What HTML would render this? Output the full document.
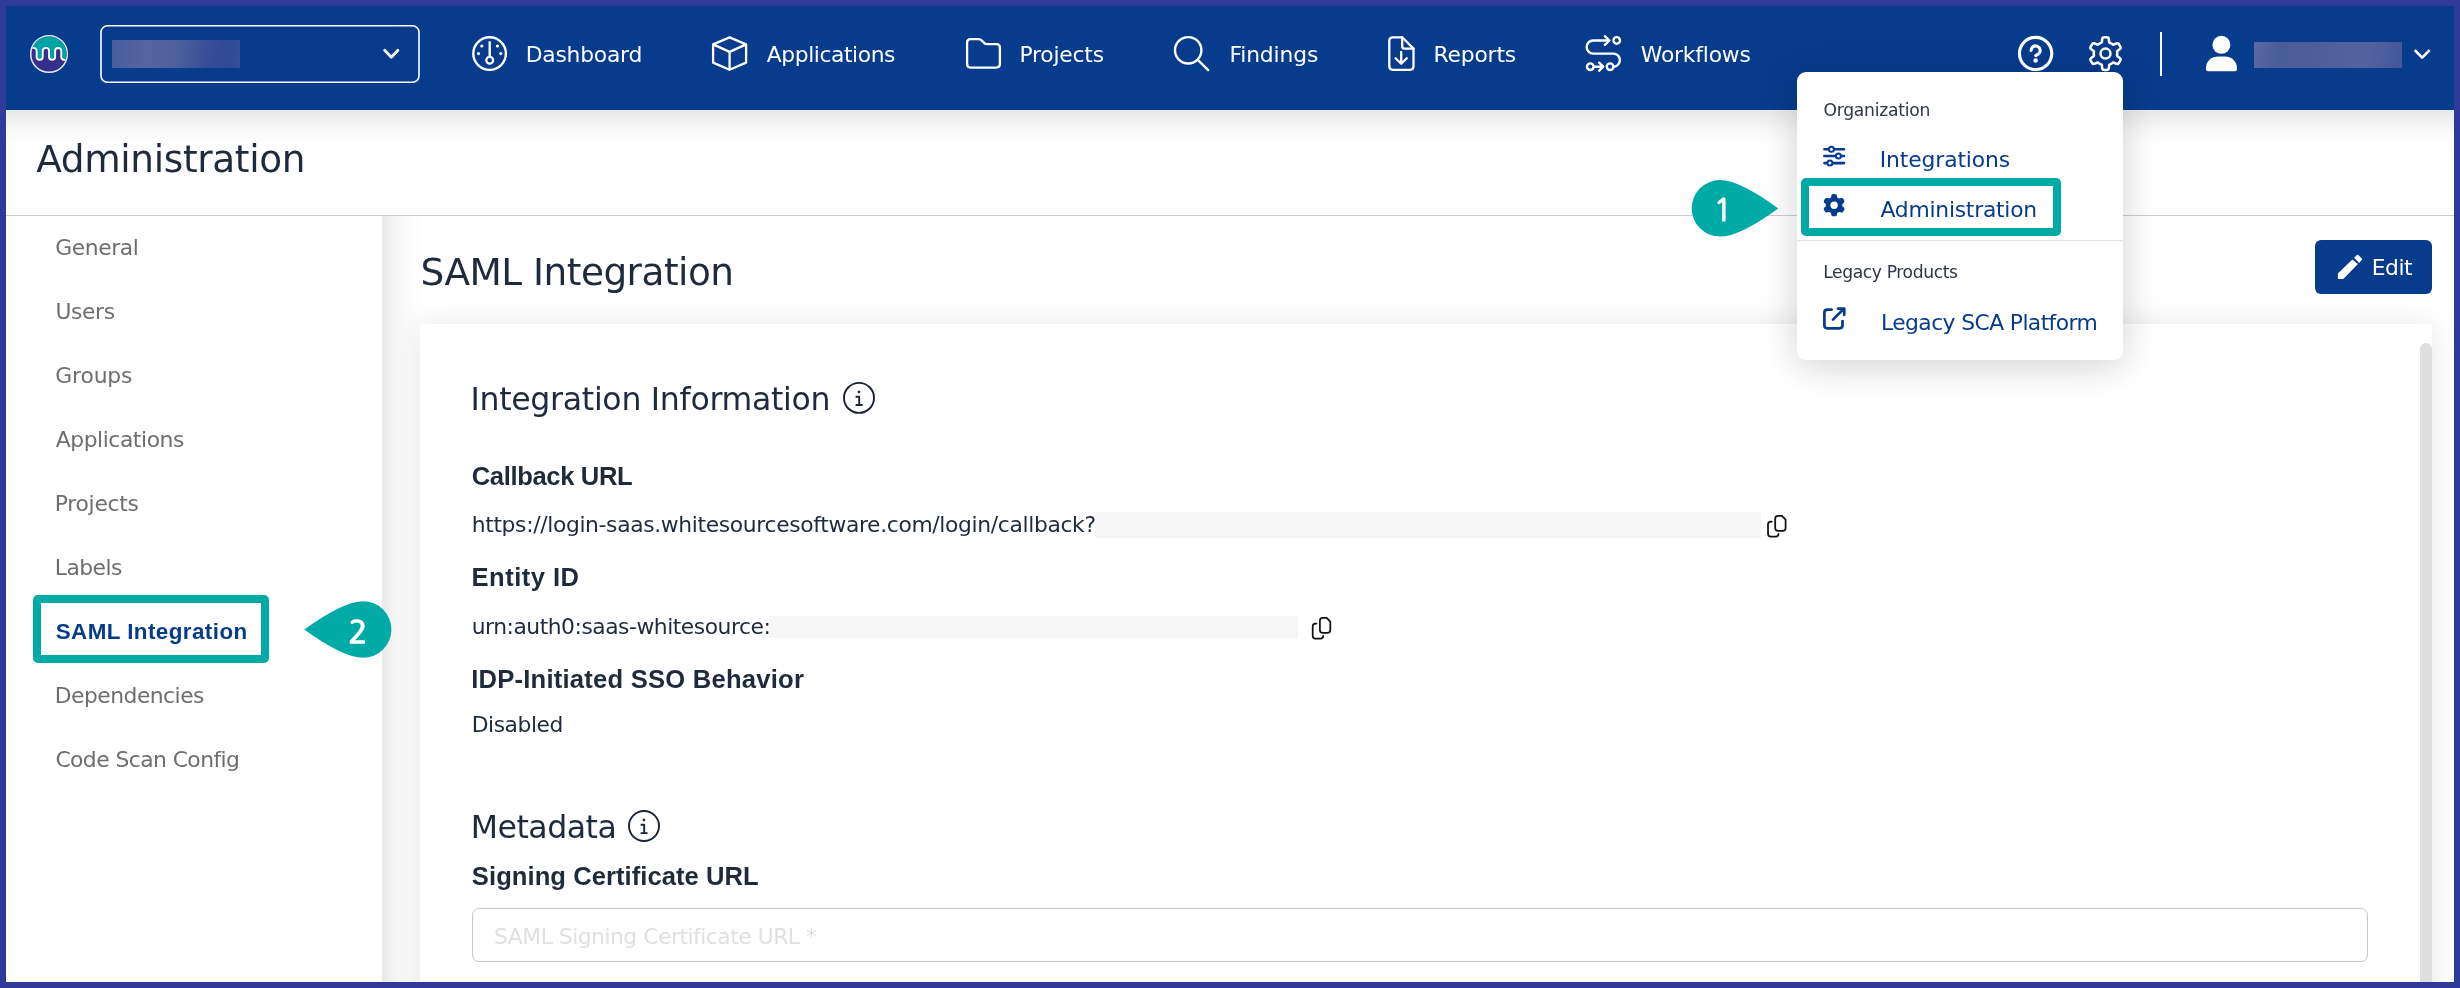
<!DOCTYPE html>
<html lang="en">
<head>
<meta charset="utf-8">
<title>Administration - SAML Integration</title>
<style>
*{box-sizing:border-box;margin:0;padding:0}
html,body{width:2460px;height:988px;overflow:hidden;background:#303a98;font-family:"Liberation Sans",sans-serif}
.abs{position:absolute}
#app{position:absolute;left:6px;top:6px;width:2448px;height:976px;background:#fff;overflow:hidden}
/* coordinates inside #app are page coords minus 6; we instead shift a page-coordinate layer */
#stage{position:absolute;left:-6px;top:-6px;width:2460px;height:988px}
#nav{left:6px;top:6px;width:2448px;height:104px;background:#073b8c}
#navsh{left:6px;top:110px;width:2448px;height:38px;background:linear-gradient(to bottom,rgba(0,0,0,.092) 0,rgba(0,0,0,.07) 16%,rgba(0,0,0,.05) 32%,rgba(0,0,0,.028) 52%,rgba(0,0,0,.012) 72%,rgba(0,0,0,0) 100%)}
#hline{left:6px;top:215px;width:2448px;height:1px;background:#c6ced2}
#main{left:382px;top:216px;width:2072px;height:766px;background:#fff;overflow:hidden}
#mainsh{left:382px;top:216px;width:42px;height:766px;background:linear-gradient(to right,rgba(0,0,0,.085) 0,rgba(0,0,0,.058) 17%,rgba(0,0,0,.036) 36%,rgba(0,0,0,.018) 58%,rgba(0,0,0,.006) 80%,rgba(0,0,0,0) 100%)}
#card{left:420px;top:324px;width:2012px;height:700px;background:#fff;box-shadow:0 0 28px rgba(0,0,0,.1)}
#sbar{left:2420px;top:343px;width:12px;height:660px;background:#dfdfdf;border-radius:6px 6px 0 0}
#edit{left:2315px;top:240px;width:117px;height:54px;background:#073b8c;border-radius:6px}
.blur{background:#f6f6f6}
#inp{left:472px;top:908px;width:1896px;height:54px;border:1px solid #c5c7d0;border-radius:7px;background:#fff}
.nblur{background:linear-gradient(100deg,rgba(255,255,255,.30),rgba(255,255,255,.22))}
#menu{left:1797px;top:72px;width:326px;height:288px;background:#fff;border-radius:9px;box-shadow:0 6px 38px rgba(0,0,0,.18)}
#mline{left:1797px;top:240px;width:326px;height:1px;background:#e2e2e2}
.tbox{border:8px solid #00aba5;border-radius:5px}
.g{display:contents}
ul{list-style:none}
.t{position:absolute;display:block;white-space:pre;line-height:1;font-weight:400;font-style:normal;text-decoration:none;font-family:"DejaVu Sans","Liberation Sans",sans-serif}
.lb{font-family:"Liberation Sans",sans-serif}
.ng{font-family:NanumGothic,"Liberation Sans",sans-serif}
svg{position:absolute;left:0;top:0;overflow:visible}
</style>
</head>
<body>
<div id="app"><div id="stage">
  <div class="abs" id="main"></div>
  <div class="abs" id="mainsh"></div>
  <div class="abs" id="card"></div>
  <div class="abs" id="sbar"></div>
  <div class="abs" id="hline"></div>
  <div class="abs" id="navsh"></div>
  <div class="abs" id="nav"></div>
  <div class="abs" style="left:112px;top:40px;width:128px;height:27.8px;background:linear-gradient(100deg,#485b9c 0%,#5565a1 28%,#4e5f9e 50%,#354b97 78%,#2f4a96 90%,#364f99 100%)"></div>
  <div class="abs" style="left:2254px;top:42.2px;width:148px;height:25.6px;background:linear-gradient(100deg,#5b6aa4 0%,#4a5b9b 18%,#4f5f9d 50%,#53629f 75%,#44569a 100%)"></div>
  <div class="abs" style="left:2160px;top:32px;width:2.2px;height:44px;background:#fff"></div>
  <div class="abs" id="edit"></div>
  <div class="abs blur" style="left:1094.5px;top:512px;width:666.5px;height:25.6px"></div>
  <div class="abs blur" style="left:768.5px;top:616.3px;width:529px;height:21.5px"></div>
  <div class="abs" id="inp"></div>
  <div class="abs" id="menu"></div>
  <div class="abs" id="mline"></div>
  <div class="abs tbox" style="left:1801px;top:178px;width:260px;height:57.5px"></div>
  <div class="abs tbox" style="left:33px;top:595px;width:236px;height:68px"></div>

<svg width="2460" height="988" viewBox="0 0 2460 988" fill="none" stroke-linecap="round" stroke-linejoin="round">
<!-- logo -->
<g>
  <clipPath id="lc"><circle cx="49" cy="54" r="17.6"/></clipPath>
  <circle cx="49" cy="54" r="18.3" fill="#36308d" stroke="#e9ecf6" stroke-width="1.5"/>
  <g clip-path="url(#lc)">
    <path fill="#00a3a3" d="M28,30 L28,47.9 L33.6,47.9 A3.05,3.05 0 0 1 36.65,51 L36.65,56.8 A3.05,3.05 0 0 0 42.75,56.8 L42.75,51 A3.15,3.15 0 0 1 49.05,51 L49.05,56.8 A3.05,3.05 0 0 0 55.15,56.8 L55.15,51 A3.05,3.05 0 0 1 61.25,51 L61.25,56.8 A3.05,3.05 0 0 0 64.3,59.9 L70,59.9 L70,30 Z"/>
    <path stroke="#fff" stroke-width="1.9" d="M28,47.9 L33.6,47.9 A3.05,3.05 0 0 1 36.65,51 L36.65,56.8 A3.05,3.05 0 0 0 42.75,56.8 L42.75,51 A3.15,3.15 0 0 1 49.05,51 L49.05,56.8 A3.05,3.05 0 0 0 55.15,56.8 L55.15,51 A3.05,3.05 0 0 1 61.25,51 L61.25,56.8 A3.05,3.05 0 0 0 64.3,59.9 L70,59.9"/>
  </g>
</g>
<!-- select box -->
<rect x="101" y="25.8" width="318" height="56.5" rx="6.5" stroke="#fff" stroke-width="1.6"/>
<!-- select chevron -->
<path stroke="#fff" stroke-width="2.8" d="M384.7,50.3 L391.3,57.3 L397.9,50.3"/>
<!-- user chevron -->
<path stroke="#fff" stroke-width="2.6" stroke-linecap="square" d="M2415.6,51 L2422.15,57.6 L2428.7,51"/>
<!-- dashboard -->
<g stroke="#fff" stroke-width="2.4">
  <circle cx="489.6" cy="53.6" r="16.3"/>
  <path d="M489.7,42.2 L489.7,56.6"/>
  <circle cx="489.7" cy="60.3" r="3.4" stroke-width="2.2"/>
  <g fill="#fff" stroke="none"><circle cx="481.8" cy="46" r="1.6"/><circle cx="497.4" cy="46" r="1.6"/><circle cx="478.5" cy="53.6" r="1.6"/><circle cx="500.8" cy="53.6" r="1.6"/></g>
</g>
<!-- cube -->
<path stroke="#fff" stroke-width="2.3" d="M729.6,37.4 L746.1,44.4 L746.1,62.6 L729.6,69.8 L713.1,62.6 L713.1,44.4 Z M713.1,44.4 L729.6,51.9 L746.1,44.4 M729.6,51.9 L729.6,69.8"/>
<!-- folder -->
<path stroke="#fff" stroke-width="2.3" d="M970.6,39.1 L978.6,39.1 Q980.4,39.1 981.6,40.4 L984.6,43.4 Q985.4,44.2 986.8,44.2 L996.4,44.2 Q999.9,44.2 999.9,47.7 L999.9,64.1 Q999.9,67.6 996.4,67.6 L970.6,67.6 Q967.1,67.6 967.1,64.1 L967.1,42.6 Q967.1,39.1 970.6,39.1 Z"/>
<!-- search -->
<g stroke="#fff" stroke-width="2.4"><circle cx="1188.2" cy="50.3" r="13.2"/><path d="M1197.8,59.9 L1208.2,70.1"/></g>
<!-- file download -->
<g stroke="#fff" stroke-width="2.3">
  <path d="M1392.8,37.3 L1402.2,37.3 L1413.5,48.6 L1413.5,66.3 Q1413.5,69.8 1410,69.8 L1392.8,69.8 Q1389.3,69.8 1389.3,66.3 L1389.3,40.8 Q1389.3,37.3 1392.8,37.3 Z"/>
  <path d="M1402.2,37.3 L1402.2,46.6 Q1402.2,48.6 1404.2,48.6 L1413.5,48.6"/>
  <path d="M1401.2,52 L1401.2,63.4 M1395.6,58.2 L1401.2,63.8 L1406.8,58.2"/>
</g>
<!-- workflows -->
<g stroke="#fff" stroke-width="2.4">
  <path d="M1608.8,40.5 L1593.2,40.5 A6.55,6.55 0 0 0 1593.2,53.6 L1613.2,53.6 A6.55,6.55 0 0 1 1613.4,66.7"/>
  <path d="M1604.9,36.2 L1609.3,40.5 L1604.9,44.8"/>
  <circle cx="1616.7" cy="40.4" r="3.3"/>
  <circle cx="1610.1" cy="66.7" r="3.3"/>
  <circle cx="1590.3" cy="66.7" r="3.3"/>
  <path d="M1594.8,66.7 L1602.6,66.7 M1599.2,62.7 L1603.2,66.7 L1599.2,70.7"/>
</g>
<!-- help -->
<g stroke="#fff"><circle cx="2035.6" cy="53.5" r="16.15" stroke-width="3.1"/>
  <path stroke-width="3.1" d="M2031.1,50.5 A4.55,4.5 0 1 1 2038.5,53.9 Q2036.2,55.2 2035.8,55.6"/>
  <circle cx="2035.6" cy="60.5" r="2.25" fill="#fff" stroke="none"/>
</g>
<!-- gear outline -->
<g stroke="#fff" stroke-width="2.5">
  <path d="M2117.2,53.6 L2117.2,54.0 L2117.2,54.4 L2117.1,54.8 L2117.1,55.2 L2117.0,55.6 L2117.2,56.1 L2118.0,56.7 L2119.1,57.5 L2120.2,58.4 L2120.7,59.1 L2120.6,59.7 L2120.4,60.2 L2120.2,60.7 L2119.9,61.3 L2119.6,61.8 L2119.3,62.2 L2119.0,62.7 L2118.7,63.2 L2118.3,63.6 L2117.9,64.0 L2117.0,63.9 L2115.7,63.5 L2114.4,62.9 L2113.5,62.5 L2113.0,62.6 L2112.7,62.8 L2112.4,63.1 L2112.0,63.3 L2111.7,63.5 L2111.3,63.7 L2111.0,63.9 L2110.6,64.1 L2110.3,64.3 L2109.9,64.4 L2109.5,64.6 L2109.2,64.9 L2109.0,66.0 L2108.9,67.4 L2108.7,68.7 L2108.3,69.5 L2107.8,69.7 L2107.2,69.8 L2106.6,69.9 L2106.1,69.9 L2105.5,69.9 L2104.9,69.9 L2104.4,69.9 L2103.8,69.8 L2103.2,69.7 L2102.7,69.5 L2102.3,68.7 L2102.1,67.4 L2102.0,66.0 L2101.8,64.9 L2101.5,64.6 L2101.1,64.4 L2100.7,64.3 L2100.4,64.1 L2100.0,63.9 L2099.7,63.7 L2099.3,63.5 L2099.0,63.3 L2098.6,63.1 L2098.3,62.8 L2098.0,62.6 L2097.5,62.5 L2096.6,62.9 L2095.3,63.5 L2094.0,63.9 L2093.1,64.0 L2092.7,63.6 L2092.3,63.2 L2092.0,62.7 L2091.7,62.2 L2091.4,61.8 L2091.1,61.3 L2090.8,60.7 L2090.6,60.2 L2090.4,59.7 L2090.3,59.1 L2090.8,58.4 L2091.9,57.5 L2093.0,56.7 L2093.8,56.1 L2094.0,55.6 L2093.9,55.2 L2093.9,54.8 L2093.8,54.4 L2093.8,54.0 L2093.8,53.6 L2093.8,53.2 L2093.8,52.8 L2093.9,52.4 L2093.9,52.0 L2094.0,51.6 L2093.8,51.1 L2093.0,50.5 L2091.9,49.7 L2090.8,48.8 L2090.3,48.1 L2090.4,47.5 L2090.6,47.0 L2090.8,46.5 L2091.1,45.9 L2091.4,45.5 L2091.7,45.0 L2092.0,44.5 L2092.3,44.0 L2092.7,43.6 L2093.1,43.2 L2094.0,43.3 L2095.3,43.7 L2096.6,44.3 L2097.5,44.7 L2098.0,44.6 L2098.3,44.4 L2098.6,44.1 L2099.0,43.9 L2099.3,43.7 L2099.7,43.5 L2100.0,43.3 L2100.4,43.1 L2100.7,42.9 L2101.1,42.8 L2101.5,42.6 L2101.8,42.3 L2102.0,41.2 L2102.1,39.8 L2102.3,38.5 L2102.7,37.7 L2103.2,37.5 L2103.8,37.4 L2104.4,37.3 L2104.9,37.3 L2105.5,37.3 L2106.1,37.3 L2106.6,37.3 L2107.2,37.4 L2107.8,37.5 L2108.3,37.7 L2108.7,38.5 L2108.9,39.8 L2109.0,41.2 L2109.2,42.3 L2109.5,42.6 L2109.9,42.8 L2110.3,42.9 L2110.6,43.1 L2111.0,43.3 L2111.3,43.5 L2111.7,43.7 L2112.0,43.9 L2112.4,44.1 L2112.7,44.4 L2113.0,44.6 L2113.5,44.7 L2114.4,44.3 L2115.7,43.7 L2117.0,43.3 L2117.9,43.2 L2118.3,43.6 L2118.7,44.0 L2119.0,44.5 L2119.3,45.0 L2119.6,45.4 L2119.9,45.9 L2120.2,46.5 L2120.4,47.0 L2120.6,47.5 L2120.7,48.1 L2120.2,48.8 L2119.1,49.7 L2118.0,50.5 L2117.2,51.1 L2117.0,51.6 L2117.1,52.0 L2117.1,52.4 L2117.2,52.8 L2117.2,53.2Z"/>
  <circle cx="2105.5" cy="53.6" r="5"/>
</g>
<!-- user -->
<g fill="#fff" stroke="none"><circle cx="2221.4" cy="44.8" r="9"/>
  <path d="M2205.9,68.9 C2205.9,61 2211.4,56.6 2218.4,56.6 L2224.5,56.6 C2231.5,56.6 2237,61 2237,68.9 Q2237,71.2 2234.7,71.2 L2208.2,71.2 Q2205.9,71.2 2205.9,68.9 Z"/></g>
<!-- pencil -->
<g fill="#fff" stroke="none">
  <path d="M2337.9,278.9 L2337.9,273.5 L2352.3,259.5 L2357.9,264.1 L2343.4,278.9 Z"/>
  <path d="M2354.1,257.7 L2356.9,255.1 Q2357.6,254.5 2358.3,255.1 L2361.8,258.6 Q2362.4,259.3 2361.8,260 L2359.2,262.9 Z"/>
</g>
<!-- info icons -->
<g stroke="#1a2433" stroke-width="1.9">
  <circle cx="859" cy="397.9" r="15"/>
  <path d="M855.6,396.7 L859.2,396.7 L859.2,405 M855.6,405 L862.6,405" stroke-linecap="butt"/>
  <path d="M858.9,390.2 L860.6,391.9 L858.9,393.6 L857.2,391.9 Z" fill="#1a2433" stroke="none"/>
  <circle cx="644" cy="826" r="15"/>
  <path d="M640.6,824.8 L644.2,824.8 L644.2,833.1 M640.6,833.1 L647.6,833.1" stroke-linecap="butt"/>
  <path d="M643.9,818.3 L645.6,820 L643.9,821.7 L642.2,820 Z" fill="#1a2433" stroke="none"/>
</g>
<!-- copy icons -->
<g stroke="#111" stroke-width="1.75">
  <path d="M1778,515.9 L1782,515.9 L1785.6,519.6 L1785.6,528 Q1785.6,530.8 1782.8,530.8 L1778,530.8 Q1775.2,530.8 1775.2,528 L1775.2,518.7 Q1775.2,515.9 1778,515.9 Z"/>
  <path d="M1771.8,521.5 L1770.8,521.5 Q1768,521.5 1768,524.3 L1768,533.7 Q1768,536.5 1770.8,536.5 L1775.7,536.5 Q1778.5,536.5 1778.5,533.9"/>
</g>
<g stroke="#111" stroke-width="1.75" transform="translate(-455.3,102)">
  <path d="M1778,515.9 L1782,515.9 L1785.6,519.6 L1785.6,528 Q1785.6,530.8 1782.8,530.8 L1778,530.8 Q1775.2,530.8 1775.2,528 L1775.2,518.7 Q1775.2,515.9 1778,515.9 Z"/>
  <path d="M1771.8,521.5 L1770.8,521.5 Q1768,521.5 1768,524.3 L1768,533.7 Q1768,536.5 1770.8,536.5 L1775.7,536.5 Q1778.5,536.5 1778.5,533.9"/>
</g>
<!-- sliders -->
<g stroke="#073b8c" stroke-width="2.6">
  <path d="M1824.4,149.2 L1844,149.2 M1824.4,156 L1844,156 M1824.4,163.1 L1844,163.1"/>
  <g fill="#fff" stroke-width="2"><circle cx="1831.4" cy="149.2" r="2.5"/><circle cx="1838.4" cy="156" r="2.5"/><circle cx="1829.9" cy="163.1" r="2.5"/></g>
</g>
<!-- gear solid -->
<path fill="#073b8c" stroke="#073b8c" stroke-width="1.6" fill-rule="evenodd" d="M1841.6,205.2 L1841.6,205.6 L1841.6,206.0 L1841.5,206.4 L1841.6,206.8 L1842.4,207.4 L1843.4,208.2 L1843.7,208.9 L1843.5,209.4 L1843.3,209.9 L1843.0,210.3 L1842.7,210.8 L1842.4,211.3 L1842.1,211.7 L1841.4,211.7 L1840.2,211.3 L1839.2,210.9 L1838.8,211.0 L1838.5,211.3 L1838.2,211.5 L1837.8,211.7 L1837.5,211.9 L1837.2,212.1 L1836.8,212.2 L1836.5,212.5 L1836.3,213.5 L1836.1,214.8 L1835.7,215.4 L1835.2,215.4 L1834.6,215.5 L1834.1,215.5 L1833.6,215.5 L1833.0,215.4 L1832.5,215.4 L1832.1,214.8 L1831.9,213.5 L1831.7,212.5 L1831.4,212.2 L1831.0,212.1 L1830.7,211.9 L1830.3,211.7 L1830.0,211.5 L1829.7,211.3 L1829.4,211.0 L1829.0,210.9 L1828.0,211.3 L1826.8,211.7 L1826.1,211.7 L1825.8,211.3 L1825.5,210.8 L1825.2,210.3 L1824.9,209.9 L1824.7,209.4 L1824.5,208.9 L1824.8,208.2 L1825.8,207.4 L1826.6,206.8 L1826.7,206.4 L1826.6,206.0 L1826.6,205.6 L1826.6,205.2 L1826.6,204.8 L1826.6,204.4 L1826.7,204.0 L1826.6,203.6 L1825.8,203.0 L1824.8,202.2 L1824.5,201.5 L1824.7,201.0 L1824.9,200.5 L1825.2,200.0 L1825.5,199.6 L1825.8,199.1 L1826.1,198.7 L1826.8,198.7 L1828.0,199.1 L1829.0,199.5 L1829.4,199.4 L1829.7,199.1 L1830.0,198.9 L1830.3,198.7 L1830.7,198.5 L1831.0,198.3 L1831.4,198.2 L1831.7,197.9 L1831.9,196.9 L1832.1,195.6 L1832.5,195.0 L1833.0,195.0 L1833.6,194.9 L1834.1,194.9 L1834.6,194.9 L1835.2,195.0 L1835.7,195.0 L1836.1,195.6 L1836.3,196.9 L1836.5,197.9 L1836.8,198.2 L1837.2,198.3 L1837.5,198.5 L1837.8,198.7 L1838.2,198.9 L1838.5,199.1 L1838.8,199.4 L1839.2,199.5 L1840.2,199.1 L1841.4,198.7 L1842.1,198.7 L1842.4,199.1 L1842.7,199.6 L1843.0,200.0 L1843.3,200.5 L1843.5,201.0 L1843.7,201.5 L1843.4,202.2 L1842.4,203.0 L1841.6,203.6 L1841.5,204.0 L1841.6,204.4 L1841.6,204.8Z"/>
<circle cx="1834.1" cy="205.2" r="3.7" fill="#fff" stroke="none"/>
<!-- external link -->
<g stroke="#073b8c" stroke-width="2.75">
  <path d="M1831.6,309.7 L1827.4,309.7 Q1824.4,309.7 1824.4,312.7 L1824.4,325.3 Q1824.4,328.3 1827.4,328.3 L1839.5,328.3 Q1842.5,328.3 1842.5,325.3 L1842.5,321"/>
  <path d="M1833,319.6 L1844,308.6 M1838,308.5 L1844.2,308.5 L1844.2,314.8"/>
</g>
<!-- markers -->
<path fill="#00aba5" stroke="none" d="M1720,180 Q1739.4,180 1778.2,208.4 Q1739.4,236.6 1720,236.6 A28.3,28.3 0 0 1 1720,180 Z"/>
<path fill="#00aba5" stroke="none" d="M363.1,601.2 Q343.5,601.2 304.2,629.5 Q343.5,657.8 363.1,657.8 A28.3,28.3 0 0 0 363.1,601.2 Z"/>

</svg>

<div id="txt" style="position:absolute;left:0;top:0;width:2460px;height:988px;will-change:transform">
<nav class="g" aria-label="Main navigation">
<a class="t" style="left:525.68px;top:43.72px;font-size:21.84px;color:#fff;letter-spacing:-0.229px">Dashboard</a>
<a class="t" style="left:766.79px;top:43.72px;font-size:21.84px;color:#fff;letter-spacing:-0.425px">Applications</a>
<a class="t" style="left:1019.48px;top:43.72px;font-size:21.84px;color:#fff;letter-spacing:-0.210px">Projects</a>
<a class="t" style="left:1229.38px;top:43.72px;font-size:21.84px;color:#fff;letter-spacing:-0.127px">Findings</a>
<a class="t" style="left:1433.58px;top:43.62px;font-size:21.84px;color:#fff;letter-spacing:-0.199px">Reports</a>
<a class="t" style="left:1640.81px;top:43.72px;font-size:21.84px;color:#fff;letter-spacing:-0.190px">Workflows</a>
</nav>
<header class="g">
<h1 class="t" style="left:36.17px;top:141.23px;font-size:37.44px;color:#1f2b3d;letter-spacing:-0.345px">Administration</h1>
</header>
<aside class="g" aria-label="Administration sections"><ul class="g">
<li class="t" style="left:55.37px;top:237.02px;font-size:21.84px;color:#6e6e6e;letter-spacing:-0.442px">General</li>
<li class="t" style="left:55.47px;top:301.02px;font-size:21.84px;color:#6e6e6e;letter-spacing:-0.389px">Users</li>
<li class="t" style="left:55.37px;top:365.02px;font-size:21.84px;color:#6e6e6e;letter-spacing:-0.157px">Groups</li>
<li class="t" style="left:55.69px;top:429.02px;font-size:21.84px;color:#6e6e6e;letter-spacing:-0.425px">Applications</li>
<li class="t" style="left:54.78px;top:493.02px;font-size:21.84px;color:#6e6e6e;letter-spacing:-0.267px">Projects</li>
<li class="t" style="left:54.78px;top:557.02px;font-size:21.84px;color:#6e6e6e;letter-spacing:-0.533px">Labels</li>
<li class="t lb" aria-current="page" style="left:55.73px;top:620.54px;font-size:22.4px;color:#073b8c;letter-spacing:0.437px;font-weight:700">SAML Integration</li>
<li class="t" style="left:54.78px;top:685.02px;font-size:21.84px;color:#6e6e6e;letter-spacing:-0.515px">Dependencies</li>
<li class="t" style="left:55.38px;top:749.02px;font-size:21.84px;color:#6e6e6e;letter-spacing:-0.553px">Code Scan Config</li>
</ul></aside>
<main class="g">
<h2 class="t" style="left:420.57px;top:253.53px;font-size:37.44px;color:#1f2b3d;letter-spacing:-0.524px">SAML Integration</h2>
<h3 class="t" style="left:470.41px;top:384.27px;font-size:31.59px;color:#1f2b3d;letter-spacing:-0.301px">Integration Information</h3>
<h4 class="t lb" style="left:471.72px;top:463.53px;font-size:25.6px;color:#1f2b3d;letter-spacing:-0.369px;font-weight:700">Callback URL</h4>
<p class="t" style="left:471.71px;top:514.12px;font-size:21.84px;color:#1f2b3d;letter-spacing:-0.348px">https://login-saas.whitesourcesoftware.com/login/callback?</p>
<h4 class="t lb" style="left:471.48px;top:565.23px;font-size:25.6px;color:#1f2b3d;letter-spacing:0.478px;font-weight:700">Entity ID</h4>
<p class="t" style="left:471.69px;top:615.52px;font-size:21.84px;color:#1f2b3d;letter-spacing:-0.474px">urn:auth0:saas-whitesource:</p>
<h4 class="t lb" style="left:471.18px;top:667.23px;font-size:25.6px;color:#1f2b3d;letter-spacing:0.225px;font-weight:700">IDP-Initiated SSO Behavior</h4>
<p class="t" style="left:471.68px;top:714.02px;font-size:21.84px;color:#1f2b3d;letter-spacing:-0.442px">Disabled</p>
<h3 class="t" style="left:470.81px;top:811.97px;font-size:31.59px;color:#1f2b3d;letter-spacing:-0.513px">Metadata</h3>
<h4 class="t lb" style="left:471.86px;top:864.33px;font-size:25.6px;color:#1f2b3d;letter-spacing:0.045px;font-weight:700">Signing Certificate URL</h4>
<span class="t" style="left:494.10px;top:925.62px;font-size:21.84px;color:#e0e0e0;letter-spacing:-0.487px">SAML Signing Certificate URL *</span>
<span class="t" style="left:2371.78px;top:256.52px;font-size:21.84px;color:#fff;letter-spacing:-0.464px">Edit</span>
</main>
<div class="g" role="menu" aria-label="Settings menu">
<h5 class="t" style="left:1823.41px;top:102.08px;font-size:17.16px;color:#2f3744;letter-spacing:-0.237px">Organization</h5>
<a class="t" role="menuitem" style="left:1879.78px;top:148.52px;font-size:21.84px;color:#073b8c;letter-spacing:-0.117px">Integrations</a>
<a class="t" role="menuitem" style="left:1880.49px;top:198.62px;font-size:21.84px;color:#073b8c;letter-spacing:-0.235px">Administration</a>
<h5 class="t" style="left:1823.16px;top:264.38px;font-size:17.16px;color:#2f3744;letter-spacing:-0.393px">Legacy Products</h5>
<a class="t" role="menuitem" style="left:1881.08px;top:311.72px;font-size:21.84px;color:#073b8c;letter-spacing:-0.592px">Legacy SCA Platform</a>
</div>
<div class="g" aria-hidden="true">
<b class="t ng" style="left:1713.42px;top:193.96px;font-size:31px;color:#fff;-webkit-text-stroke:1.2px #fff">1</b>
<b class="t ng" style="left:348.45px;top:616.16px;font-size:31px;color:#fff;-webkit-text-stroke:1.5px #fff">2</b>
</div>
</div>
</div></div>
</body>
</html>
